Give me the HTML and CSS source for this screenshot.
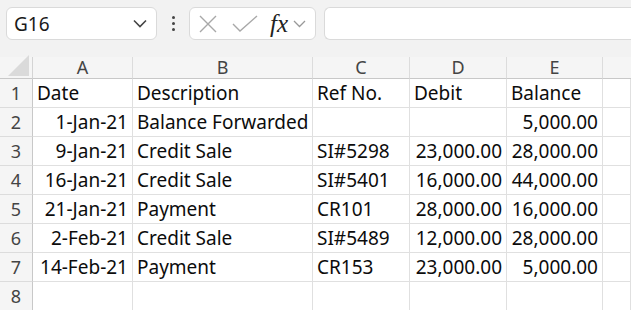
FILE: index.html
```html
<!DOCTYPE html>
<html lang="en">
<head>
<meta charset="UTF-8">
<title>Sheet</title>
<link rel="stylesheet" href="styles.css">
</head>
<body>

<div class="toolbar">
  <div class="name-box">
    <span>G16</span>
    <svg width="14" height="9" viewBox="0 0 14 9"><path d="M1 1.5 L7 7.5 L13 1.5" fill="none" stroke="#444" stroke-width="1.6"/></svg>
  </div>
  <div class="dots"><i></i><i></i><i></i></div>
  <div class="fx-box">
    <svg width="18" height="18" viewBox="0 0 18 18"><path d="M1 1 L17 17 M17 1 L1 17" stroke="#a8a8a8" stroke-width="1.4"/></svg>
    <svg width="26" height="18" viewBox="0 0 26 18"><path d="M1 9 L8 16 L25 1" fill="none" stroke="#a8a8a8" stroke-width="1.4"/></svg>
    <span class="fx">fx</span>
    <svg width="13" height="8" viewBox="0 0 13 8"><path d="M1 1 L6.5 6.5 L12 1" fill="none" stroke="#999" stroke-width="1.3"/></svg>
  </div>
  <div class="formula"></div>
</div>

<div class="sheet">
  <div class="corner"><span class="tri"></span></div>
  <div class="col-head">A</div>
  <div class="col-head">B</div>
  <div class="col-head">C</div>
  <div class="col-head">D</div>
  <div class="col-head">E</div>
  <div class="col-head last"></div>

  <div class="row-head">1</div>
  <div class="cell">Date</div>
  <div class="cell">Description</div>
  <div class="cell">Ref No.</div>
  <div class="cell">Debit</div>
  <div class="cell">Balance</div>
  <div class="cell"></div>

  <div class="row-head">2</div>
  <div class="cell num">1-Jan-21</div>
  <div class="cell">Balance Forwarded</div>
  <div class="cell"></div>
  <div class="cell"></div>
  <div class="cell num">5,000.00</div>
  <div class="cell"></div>

  <div class="row-head">3</div>
  <div class="cell num">9-Jan-21</div>
  <div class="cell">Credit Sale</div>
  <div class="cell">SI#5298</div>
  <div class="cell num">23,000.00</div>
  <div class="cell num">28,000.00</div>
  <div class="cell"></div>

  <div class="row-head">4</div>
  <div class="cell num">16-Jan-21</div>
  <div class="cell">Credit Sale</div>
  <div class="cell">SI#5401</div>
  <div class="cell num">16,000.00</div>
  <div class="cell num">44,000.00</div>
  <div class="cell"></div>

  <div class="row-head">5</div>
  <div class="cell num">21-Jan-21</div>
  <div class="cell">Payment</div>
  <div class="cell">CR101</div>
  <div class="cell num">28,000.00</div>
  <div class="cell num">16,000.00</div>
  <div class="cell"></div>

  <div class="row-head">6</div>
  <div class="cell num">2-Feb-21</div>
  <div class="cell">Credit Sale</div>
  <div class="cell">SI#5489</div>
  <div class="cell num">12,000.00</div>
  <div class="cell num">28,000.00</div>
  <div class="cell"></div>

  <div class="row-head">7</div>
  <div class="cell num">14-Feb-21</div>
  <div class="cell">Payment</div>
  <div class="cell">CR153</div>
  <div class="cell num">23,000.00</div>
  <div class="cell num">5,000.00</div>
  <div class="cell"></div>

  <div class="row-head">8</div>
  <div class="cell"></div>
  <div class="cell"></div>
  <div class="cell"></div>
  <div class="cell"></div>
  <div class="cell"></div>
  <div class="cell"></div>
</div>

</body>
</html>
```

FILE: styles.css
```css
* {
  margin: 0;
  padding: 0;
  box-sizing: border-box;
}

body {
  width: 631px;
  height: 310px;
  overflow: hidden;
  background-color: #fff;
  font-family: "Noto Sans", sans-serif;
  color: #111;
}

.toolbar {
  height: 57px;
  background-color: #f2f2f2;
  display: flex;
  align-items: flex-start;
  padding-top: 7px;
  padding-left: 6px;
}

.name-box {
  width: 151px;
  height: 33px;
  background-color: #fff;
  border: 1px solid #dadada;
  border-radius: 6px;
  display: flex;
  align-items: center;
  justify-content: space-between;
  padding: 0 9px 0 7px;
  font-size: 19px;
  color: #1a1a1a;
}

.dots {
  width: 32px;
  height: 33px;
  display: flex;
  flex-direction: column;
  align-items: center;
  justify-content: center;
  gap: 3px;
}

.dots i {
  width: 3px;
  height: 3px;
  background-color: #444;
  border-radius: 50%;
}

.fx-box {
  width: 127px;
  height: 33px;
  background-color: #fff;
  border: 1px solid #dadada;
  border-radius: 6px;
  display: flex;
  align-items: center;
  padding-left: 9px;
}

.fx-box svg:nth-child(2) {
  margin-left: 15px;
}

.fx {
  font-family: "Liberation Serif", serif;
  font-style: italic;
  font-size: 25px;
  margin-left: 12px;
  margin-right: 5px;
  line-height: 1;
  color: #222;
}

.formula {
  flex: 1;
  height: 33px;
  margin-left: 8px;
  background-color: #fff;
  border: 1px solid #dadada;
  border-right: none;
  border-radius: 6px 0 0 6px;
}

.sheet {
  display: grid;
  grid-template-columns: 33px 100px 180px 97px 97px 96px 28px;
  grid-template-rows: 22px repeat(8, 29px);
}

.corner {
  background-color: #f5f5f5;
  border-right: 1px solid #d4d4d4;
  border-bottom: 1px solid #c8c8c8;
  position: relative;
}

.tri {
  position: absolute;
  right: 3px;
  bottom: 2px;
  width: 0;
  height: 0;
  border-left: 21px solid transparent;
  border-bottom: 21px solid #dadada;
}

.col-head {
  background-color: #f5f5f5;
  border-right: 1px solid #dcdcdc;
  border-bottom: 1px solid #c8c8c8;
  color: #444;
  font-size: 18px;
  text-align: center;
  line-height: 21px;
}

.col-head.last {
  border-right: none;
}

.row-head {
  background-color: #f5f5f5;
  border-right: 1px solid #c8c8c8;
  border-bottom: 1px solid #dcdcdc;
  color: #444;
  font-size: 18px;
  text-align: center;
  line-height: 29px;
}

.cell {
  border-right: 1px solid #e0e0e0;
  border-bottom: 1px solid #e0e0e0;
  font-size: 19px;
  line-height: 27px;
  padding: 1px 4px 0 4px;
  white-space: nowrap;
  color: #0c0c0c;
}

.num {
  text-align: right;
}
```
